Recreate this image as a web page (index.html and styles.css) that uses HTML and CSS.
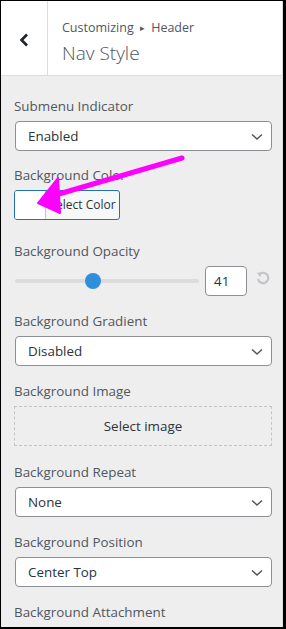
FILE: index.html
```html
<!DOCTYPE html>
<html>
<head>
<meta charset="utf-8">
<link rel="stylesheet" href="styles.css">
</head>
<body>
<div class="frame">
  <header class="head">
    <div class="back">
      <svg width="12" height="14" viewBox="0 0 12 14"><path d="M9 1.5 L3.5 7 L9 12.5" fill="none" stroke="#1d2327" stroke-width="2.6"/></svg>
    </div>
    <div class="titles">
      <div class="crumb">Customizing <span class="tri">▸</span> Header</div>
      <div class="title">Nav Style</div>
    </div>
  </header>
  <main class="panel">
    <div class="ctl first">
      <div class="lbl">Submenu Indicator</div>
      <div class="sel"><span>Enabled</span><svg class="chev" width="12" height="8" viewBox="0 0 12 8"><path d="M1 1.5 L6 6 L11 1.5" fill="none" stroke="#50575e" stroke-width="1.5"/></svg></div>
    </div>
    <div class="ctl color">
      <div class="lbl">Background Color</div>
      <div class="colorbtn"><span class="swatch"></span><span class="ctext">Select Color</span></div>
    </div>
    <div class="ctl">
      <div class="lbl">Background Opacity</div>
      <div class="range">
        <div class="track"><span class="thumb"></span></div>
        <div class="num">41</div>
        <svg class="reset" width="16" height="16" viewBox="0 0 16 16"><path d="M4.2 4.5 A5.2 5.2 0 1 1 3 9" fill="none" stroke="#c3c4c7" stroke-width="2.2"/><path d="M1.8 2.8 L6.6 2.6 L5.4 7.2 Z" fill="#c3c4c7"/></svg>
      </div>
    </div>
    <div class="ctl">
      <div class="lbl">Background Gradient</div>
      <div class="sel"><span>Disabled</span><svg class="chev" width="12" height="8" viewBox="0 0 12 8"><path d="M1 1.5 L6 6 L11 1.5" fill="none" stroke="#50575e" stroke-width="1.5"/></svg></div>
    </div>
    <div class="ctl image">
      <div class="lbl">Background Image</div>
      <div class="imgbox">Select image</div>
    </div>
    <div class="ctl">
      <div class="lbl">Background Repeat</div>
      <div class="sel"><span>None</span><svg class="chev" width="12" height="8" viewBox="0 0 12 8"><path d="M1 1.5 L6 6 L11 1.5" fill="none" stroke="#50575e" stroke-width="1.5"/></svg></div>
    </div>
    <div class="ctl">
      <div class="lbl">Background Position</div>
      <div class="sel"><span>Center Top</span><svg class="chev" width="12" height="8" viewBox="0 0 12 8"><path d="M1 1.5 L6 6 L11 1.5" fill="none" stroke="#50575e" stroke-width="1.5"/></svg></div>
    </div>
    <div class="ctl">
      <div class="lbl">Background Attachment</div>
    </div>
  </main>
  <svg class="arrow" width="286" height="629" viewBox="0 0 286 629">
    <line x1="182" y1="158" x2="52" y2="196" stroke="#ff00ff" stroke-width="5" stroke-linecap="round"/>
    <path d="M38 203 L58 178 L60 213 Z" fill="#ff00ff" stroke="#ff00ff" stroke-width="2" stroke-linejoin="round"/>
  </svg>
</div>
</body>
</html>
```
FILE: styles.css
```css
html, body {
  margin: 0;
  padding: 0;
  background: #000;
}
.frame {
  position: relative;
  width: 286px;
  height: 629px;
  box-sizing: border-box;
  border-style: solid;
  border-color: #000;
  border-width: 1px 3px 2px 1px;
  background: #eeeeee;
  overflow: hidden;
  font-family: "Open Sans", "Noto Sans", sans-serif;
  color: #50575e;
}
.head {
  display: flex;
  height: 74px;
  background: #fff;
  border-bottom: 1px solid #dcdcde;
  border-right: 1px solid #dcdcde;
}
.back {
  width: 47px;
  border-right: 1px solid #dcdcde;
  display: flex;
  align-items: center;
  justify-content: center;
  padding-top: 3px;
  box-sizing: border-box;
}
.titles {
  padding: 17px 0 0 14px;
}
.crumb {
  font-size: 12.5px;
  line-height: 20px;
  color: #50575e;
}
.tri {
  font-size: 9px;
  position: relative;
  top: -1px;
  margin: 0 3px;
}
.title {
  font-size: 19px;
  font-weight: 300;
  line-height: 26px;
  margin-top: 1px;
  color: #50575e;
}
.panel {
  padding: 19px 10px 0 13px;
  border-right: 1px solid #dcdcde;
  height: 100%;
}
.ctl {
  margin-bottom: 14px;
}
.ctl.first {
  margin-bottom: 13px;
}
.ctl.color {
  margin-bottom: 20px;
}
.ctl.image {
  margin-bottom: 15px;
}
.lbl {
  font-size: 13.4px;
  line-height: 18px;
  color: #50575e;
  padding-top: 2px;
  margin-bottom: 6px;
}
.sel {
  height: 30px;
  box-sizing: border-box;
  background: #fff;
  border: 1px solid #8c8f94;
  border-radius: 4px;
  margin-left: 1px;
  display: flex;
  align-items: center;
  justify-content: space-between;
  padding: 0 8px 0 12px;
  font-size: 13.4px;
  color: #2c3338;
}
.chev { margin-top: 1px; }
.colorbtn {
  display: flex;
  width: 106px;
  height: 30px;
  box-sizing: border-box;
  border: 1px solid #2271b1;
  border-radius: 3px;
  overflow: hidden;
  background: #f6f7f7;
}
.swatch {
  width: 30px;
  background: #fff;
  border-right: 1px solid #c3c4c7;
}
.ctext {
  flex: 1;
  font-size: 12px;
  line-height: 28px;
  text-align: center;
  color: #2c3338;
}
.range {
  display: flex;
  align-items: center;
  height: 30px;
  margin-top: 2px;
}
.track {
  position: relative;
  width: 184px;
  height: 4px;
  background: #dcdcde;
  border-radius: 2px;
  margin-left: 1px;
}
.thumb {
  position: absolute;
  left: 70px;
  top: -6px;
  width: 16px;
  height: 16px;
  border-radius: 50%;
  background: #2e8fdc;
}
.num {
  margin-left: 6px;
  width: 42px;
  height: 30px;
  box-sizing: border-box;
  border: 1px solid #8c8f94;
  border-radius: 4px;
  background: #fff;
  font-size: 13.4px;
  line-height: 28px;
  padding-left: 8px;
  color: #2c3338;
}
.reset {
  margin-left: 8px;
  margin-top: -6px;
}
.imgbox {
  height: 40px;
  box-sizing: border-box;
  border: 1px dashed #c3c4c7;
  display: flex;
  align-items: center;
  justify-content: center;
  font-size: 13.4px;
  color: #2c3338;
}
.arrow {
  position: absolute;
  left: -1px;
  top: -1px;
  pointer-events: none;
}
```
